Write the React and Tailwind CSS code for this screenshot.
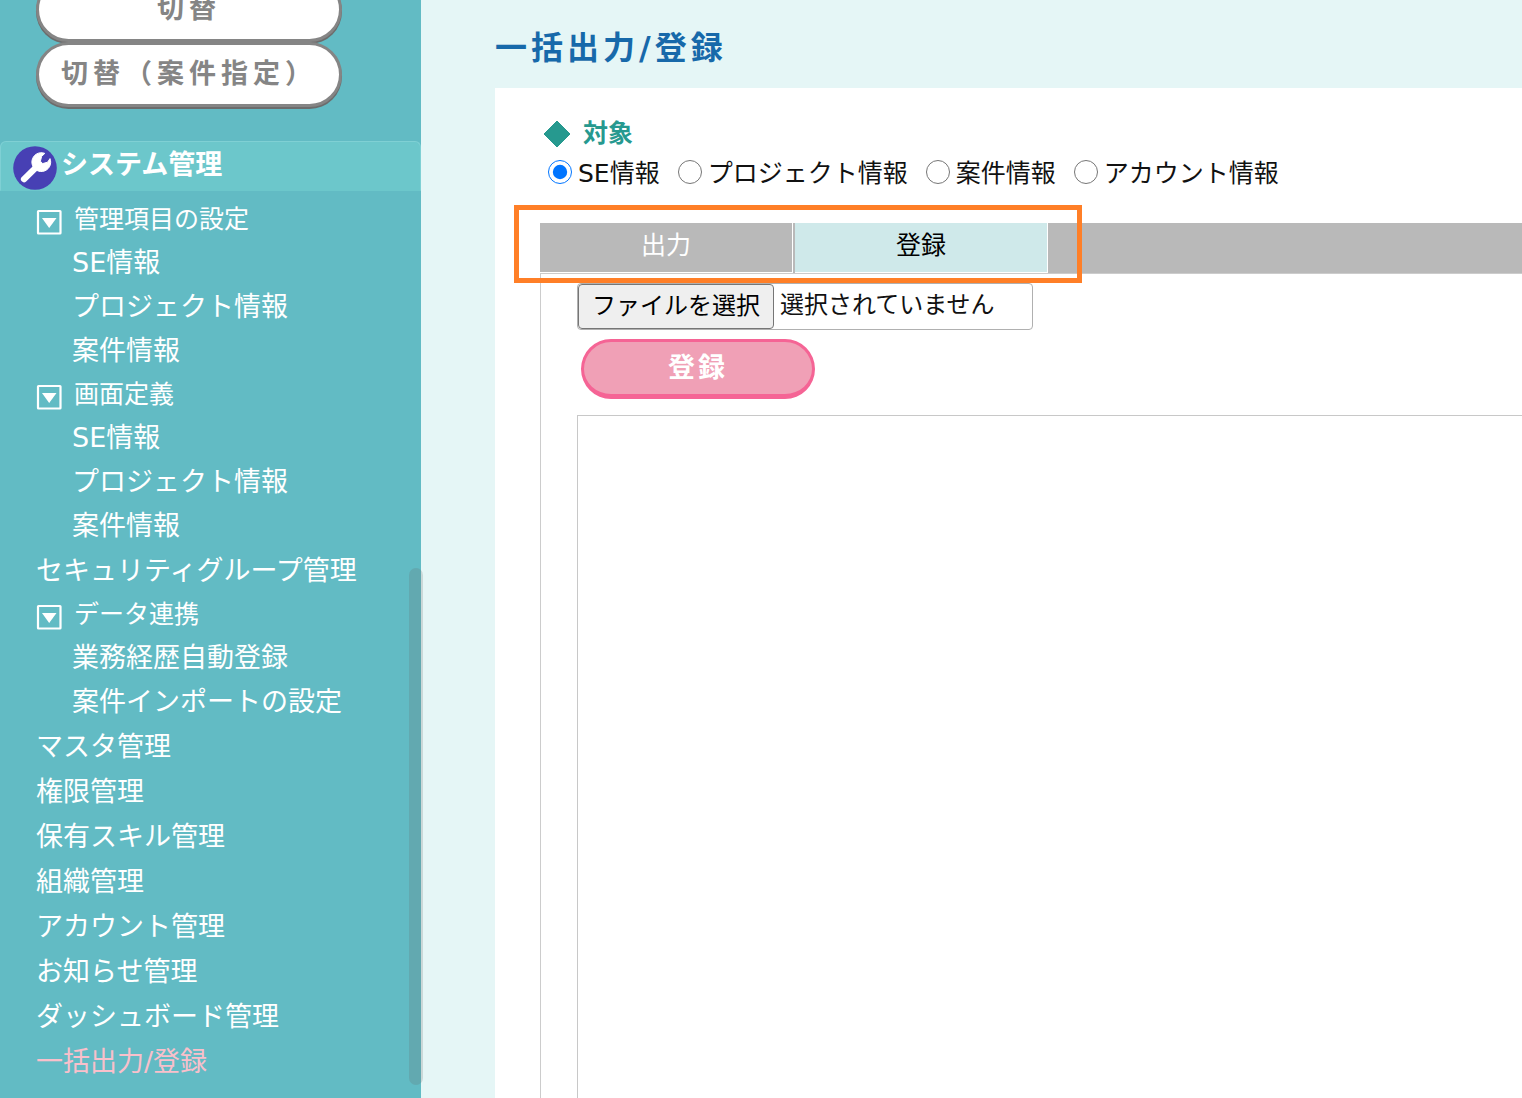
import { useState } from "react";

const groups = [
  { title: "管理項目の設定", items: ["SE情報", "プロジェクト情報", "案件情報"] },
  { title: "画面定義", items: ["SE情報", "プロジェクト情報", "案件情報"] },
  { link: "セキュリティグループ管理" },
  { title: "データ連携", items: ["業務経歴自動登録", "案件インポートの設定"] },
  { link: "マスタ管理" },
  { link: "権限管理" },
  { link: "保有スキル管理" },
  { link: "組織管理" },
  { link: "アカウント管理" },
  { link: "お知らせ管理" },
  { link: "ダッシュボード管理" },
  { link: "一括出力/登録", active: true },
];

const targets = ["SE情報", "プロジェクト情報", "案件情報", "アカウント情報"];

function WrenchBadge() {
  return (
    <svg viewBox="0 0 44 44" className="mt-1 size-11 shrink-0" aria-hidden="true">
      <circle cx="22" cy="22" r="21.8" fill="#4740b4" />
      <path d="M11 33.2 L24.5 20" stroke="#fff" strokeWidth="6.2" strokeLinecap="round" />
      <path
        d="M31.8 7.4 A9.4 9.4 0 1 0 37 12.6 L34.6 16.2 L29.6 17.6 L27.4 15.2 L28.6 10.4 Z"
        fill="#fff"
        stroke="#fff"
        strokeWidth="1"
        strokeLinejoin="round"
      />
    </svg>
  );
}

function ToggleIcon() {
  return (
    <svg viewBox="0 0 26 26" className="mt-1 size-[26px] shrink-0" aria-hidden="true">
      <rect x="2" y="2" width="22.5" height="22.5" rx="0.5" fill="none" stroke="#fff" strokeWidth="2.2" />
      <path d="M6 9 H20.5 L13.2 19 Z" fill="#fff" />
    </svg>
  );
}

function SwitchButton({ children }) {
  return (
    <button
      type="button"
      className="flex h-[65px] w-full justify-center rounded-full border-3 border-[#858585] bg-white pt-2 text-[27px] leading-[42px] font-bold tracking-[5px] text-[#858585] shadow-[0_2px_0_#6c6c6c]"
    >
      {children}
    </button>
  );
}

function Sidebar() {
  return (
    <aside className="relative w-[421px] shrink-0 bg-[#62bbc4] text-white">
      <div className="h-full overflow-hidden">
        <div className="-mt-[23px] flex w-[342px] flex-col pl-9">
          <SwitchButton>切替</SwitchButton>
          <SwitchButton>切替（案件指定）</SwitchButton>
        </div>
        <h2 className="mt-[34px] flex h-[50px] items-start rounded-t-md border border-[#7fd0d4] border-b-[#6cc7cb] bg-[#6cc7cb] pl-3 text-[27px] leading-[46px] font-bold">
          <WrenchBadge />
          <span className="pl-1">システム管理</span>
        </h2>
        <nav className="pt-[7px] text-[27px]">
          <ul>
            {groups.map((g) =>
              g.link ? (
                <li key={g.link} className="h-[45px] pl-9 leading-[45px]">
                  <a href="#" className={g.active ? "text-[#f9c0cb]" : ""}>
                    {g.link}
                  </a>
                </li>
              ) : (
                <li key={g.title}>
                  <button type="button" className="flex h-[43px] items-center gap-3 pl-9 text-[25px] leading-[43px]">
                    <ToggleIcon />
                    {g.title}
                  </button>
                  <ul>
                    {g.items.map((i) => (
                      <li key={i} className="h-11 pl-[72px] leading-[44px]">
                        <a href="#">{i}</a>
                      </li>
                    ))}
                  </ul>
                </li>
              ),
            )}
          </ul>
        </nav>
      </div>
      <div className="absolute -right-0.5 bottom-[13px] h-[517px] w-3.5 rounded-full bg-[#646464]/20" />
    </aside>
  );
}

function Tab({ selected, onClick, children }) {
  return (
    <button
      type="button"
      role="tab"
      aria-selected={selected}
      onClick={onClick}
      className={
        "h-[50px] w-[253px] border-r border-b border-white pb-1 text-[25px] leading-[45px] " +
        (selected ? "bg-[#cfe9ea] text-black" : "bg-[#b9b9b9] text-white")
      }
    >
      {children}
    </button>
  );
}

export default function App() {
  const [target, setTarget] = useState(targets[0]);
  const [tab, setTab] = useState("登録");
  return (
    <div className="flex h-screen overflow-hidden bg-[#e5f6f6] font-['DejaVu_Sans','Noto_Sans_CJK_JP',sans-serif] text-[#111]">
      <Sidebar />
      <main className="flex min-w-0 flex-1 flex-col pl-[74px]">
        <h1 className="h-[88px] pt-6 text-[32px] leading-[48px] font-bold tracking-[4px] text-[#1769aa]">
          一括出力/登録
        </h1>
        <div className="flex flex-1 flex-col bg-white pt-7 pl-[45px]">
          <fieldset>
            <legend className="flex h-9 items-center gap-3 pl-[3px] text-[25px] leading-[36px] font-bold text-[#26998f]">
              <svg viewBox="0 0 28 28" className="size-7" aria-hidden="true">
                <path d="M14 1 L27 14 L14 27 L1 14 Z" fill="#26998f" stroke="#26998f" strokeLinejoin="round" />
              </svg>
              対象
            </legend>
            <div className="flex h-11 items-center gap-[18px] pl-2 text-[25px]">
              {targets.map((t) => (
                <label key={t} className="flex items-center gap-1.5 leading-[44px]">
                  <input
                    type="radio"
                    name="target"
                    checked={target === t}
                    onChange={() => setTarget(t)}
                    className="mb-1 size-6 accent-[#0075ff]"
                  />
                  {t}
                </label>
              ))}
            </div>
          </fieldset>

          <div className="relative mt-[27px]">
            <div role="tablist" className="flex h-[51px] gap-0.5 border-b border-[#cccccc] bg-[#b9b9b9]">
              {["出力", "登録"].map((t) => (
                <Tab key={t} selected={tab === t} onClick={() => setTab(t)}>
                  {t}
                </Tab>
              ))}
            </div>
            <div className="pointer-events-none absolute -top-[18px] -left-[26px] h-[78px] w-[568px] border-5 border-[#ff7f27]" />
          </div>

          <div className="flex flex-1 flex-col border-l border-[#cccccc] pt-[9px] pl-9">
            <label className="flex h-[47px] w-[456px] items-stretch rounded-sm border border-[#b0b0b0] text-2xl leading-[43px]">
              <input type="file" className="sr-only" />
              <span className="rounded-sm border border-[#767676] bg-[#efefef] px-[13px] text-black">ファイルを選択</span>
              <span className="pl-1.5">選択されていません</span>
            </label>
            <button
              type="button"
              className="mt-[9px] ml-1 h-[60px] w-[234px] rounded-full border-3 border-b-5 border-[#f56495] bg-[#f0a0b6] text-[27px] leading-[48px] font-bold tracking-[3px] text-white"
            >
              登録
            </button>
            <div className="mt-4 flex-1 border-t border-l border-[#c8c8c8]" />
          </div>
        </div>
      </main>
    </div>
  );
}
